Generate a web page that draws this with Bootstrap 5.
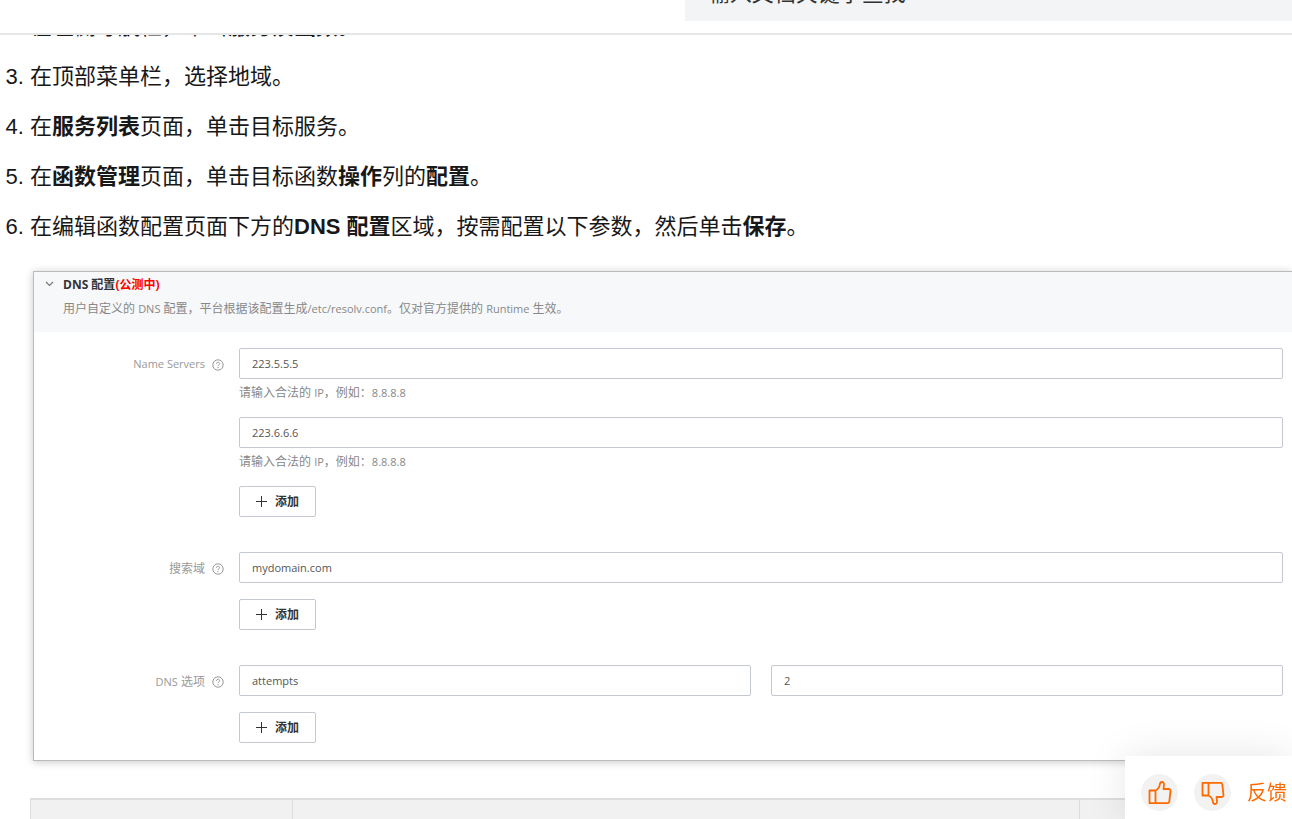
<!DOCTYPE html>
<html lang="zh-CN">
<head>
<meta charset="utf-8">
<meta name="viewport" content="width=device-width, initial-scale=1">
<title>DNS 配置</title>
<link href="https://cdn.jsdelivr.net/npm/bootstrap@5.3.0/dist/css/bootstrap.min.css" rel="stylesheet">
<style>
  body { font-family: "Liberation Sans", "Noto Sans CJK SC", sans-serif; color: #181818; background: #fff; }
  .topbar { height: 35px; border-bottom: 2px solid #e6e6e6; padding-bottom: 12px; z-index: 20; }
  .topbar .search-box { width: 47%; height: 54px; padding: 0 23px; border: 0; border-radius: 0; background: #f3f4f6; font-size: 22px; }
  .topbar .search-box::placeholder { color: #333; opacity: 1; }
  .doc { padding-top: 12px; }
  .steps { padding-left: 30px; font-size: 22px; line-height: 30px; margin-bottom: 29px; }
  .steps li + li { margin-top: 20px; }
  .panel { margin-left: 33px; border: 1px solid #b9bbbe; border-right: 0; box-shadow: 0 1px 8px rgba(0,0,0,.22); font-family: "Open Sans", "Noto Sans CJK SC", sans-serif; font-size: 12px; color: #888; }
  .panel .en { font-size: 11px; }
  .panel-top { height: 60px; background: #f7f8fa; padding-left: 10px; gap: 8px; }
  .panel-top h2 { font-size: 12px; line-height: 24px; margin: 1px 0 0; color: #333; }
  .panel-top h2 span { color: #f00; }
  .panel-top p { line-height: 24px; margin: 0; color: #888; }
  .fold { width: 11px; height: 24px; padding: 0; border: 0; background: none; }
  .panel-body { padding: 16px 9px 17px 0; }
  .field-group + .field-group { margin-top: 35px; }
  .field-label { flex: 0 0 205px; height: 33px; padding-right: 15px; gap: 7px; color: #999; }
  .panel .form-control { height: 31px; padding: 0 12px; font-size: 11px; color: #555; border: 1px solid #c4c9cf; border-radius: 2px; }
  .hint { line-height: 28px; margin-bottom: 10px; }
  .add-btn { width: 77px; height: 31px; padding: 0; gap: 8px; font-size: 12px; font-weight: 600; color: #333; border: 1px solid #c4c9cf; border-radius: 2px; background: #fff; }
  .pair { gap: 20px; }
  .mt-field { margin-top: 16px; }
  .params { margin: 37px 0 0 30px; }
  .params table { width: 100%; table-layout: fixed; border-collapse: collapse; }
  .params th { height: 60px; background: #f1f1f1; border: 1px solid #ddd; border-top-width: 2px; }
  .params .c-name { width: 20.8%; }
  .params .c-desc { width: 62.4%; }
  .feedback { padding: 17px 5px 7px 16px; gap: 16px; background: #fff; box-shadow: 0 0 40px rgba(0,0,0,.1); z-index: 10; }
  .vote { width: 37px; height: 37px; padding: 0; border: 0; border-radius: 50%; background: #f2f2f2; }
  .feedback a { font-size: 20px; line-height: 37px; padding-top: 2px; color: #ff6a00; }
</style>
</head>
<body>
<div class="vh-100 overflow-hidden position-relative">
  <header class="topbar fixed-top bg-white d-flex justify-content-end align-items-end overflow-hidden">
    <input class="search-box" type="search" placeholder="输入文档关键字查找" aria-label="搜索文档">
  </header>

  <main class="doc">
    <ol class="steps" start="2">
      <li>在左侧导航栏，单击<b>服务及函数</b>。</li>
      <li>在顶部菜单栏，选择地域。</li>
      <li>在<b>服务列表</b>页面，单击目标服务。</li>
      <li>在<b>函数管理</b>页面，单击目标函数<b>操作</b>列的<b>配置</b>。</li>
      <li>在编辑函数配置页面下方的<b>DNS 配置</b>区域，按需配置以下参数，然后单击<b>保存</b>。</li>
    </ol>

    <section class="panel bg-white">
      <div class="panel-top d-flex">
        <button class="fold d-flex align-items-center justify-content-center" type="button" aria-label="收起">
          <svg width="9" height="6" viewBox="0 0 9 6" fill="none" stroke="#777" stroke-width="1.2"><path d="M1 1l3.5 3.5L8 1"/></svg>
        </button>
        <div>
          <h2 class="fw-bold">DNS 配置<span>(公测中)</span></h2>
          <p>用户自定义的 <span class="en">DNS</span> 配置，平台根据该配置生成<span class="en">/etc/resolv.conf</span>。仅对官方提供的 <span class="en">Runtime</span> 生效。</p>
        </div>
      </div>

      <form class="panel-body">
        <div class="field-group d-flex">
          <label class="field-label d-flex align-items-center justify-content-end" for="ns1"><span class="en">Name Servers</span>
            <svg width="12" height="12" viewBox="0 0 12 12" fill="none" stroke="#999"><circle cx="6" cy="6" r="5.2"/><path d="M4.4 4.8c0-2.1 3.2-2.1 3.2-.1C7.600 5.800 6 5.800 6 7.100M6 8v1.200"/></svg>
          </label>
          <div class="flex-fill">
            <input class="form-control" id="ns1" type="text" value="223.5.5.5">
            <div class="hint">请输入合法的 <span class="en">IP</span>，例如：<span class="en">8.8.8.8</span></div>
            <input class="form-control" type="text" value="223.6.6.6" aria-label="Name Server 2">
            <div class="hint">请输入合法的 <span class="en">IP</span>，例如：<span class="en">8.8.8.8</span></div>
            <button class="add-btn d-flex align-items-center justify-content-center" type="button"><svg width="11" height="11" viewBox="0 0 11 11" stroke="#333"><path d="M5.500 0v11M0 5.500h11"/></svg>添加</button>
          </div>
        </div>

        <div class="field-group d-flex">
          <label class="field-label d-flex align-items-center justify-content-end" for="domain">搜索域
            <svg width="12" height="12" viewBox="0 0 12 12" fill="none" stroke="#999"><circle cx="6" cy="6" r="5.2"/><path d="M4.4 4.8c0-2.1 3.2-2.1 3.2-.1C7.600 5.800 6 5.800 6 7.100M6 8v1.200"/></svg>
          </label>
          <div class="flex-fill">
            <input class="form-control" id="domain" type="text" value="mydomain.com">
            <button class="add-btn mt-field d-flex align-items-center justify-content-center" type="button"><svg width="11" height="11" viewBox="0 0 11 11" stroke="#333"><path d="M5.500 0v11M0 5.500h11"/></svg>添加</button>
          </div>
        </div>

        <div class="field-group d-flex">
          <label class="field-label d-flex align-items-center justify-content-end" for="opt"><span><span class="en">DNS</span> 选项</span>
            <svg width="12" height="12" viewBox="0 0 12 12" fill="none" stroke="#999"><circle cx="6" cy="6" r="5.2"/><path d="M4.4 4.8c0-2.1 3.2-2.1 3.2-.1C7.600 5.800 6 5.800 6 7.100M6 8v1.200"/></svg>
          </label>
          <div class="flex-fill">
            <div class="pair d-flex">
              <input class="form-control" id="opt" type="text" value="attempts">
              <input class="form-control" type="text" value="2" aria-label="选项值">
            </div>
            <button class="add-btn mt-field d-flex align-items-center justify-content-center" type="button"><svg width="11" height="11" viewBox="0 0 11 11" stroke="#333"><path d="M5.500 0v11M0 5.500h11"/></svg>添加</button>
          </div>
        </div>
      </form>
    </section>

    <div class="params">
      <table>
        <thead><tr><th class="c-name"></th><th class="c-desc"></th><th></th></tr></thead>
      </table>
    </div>
  </main>

  <aside class="feedback position-fixed bottom-0 end-0 d-flex align-items-center">
    <button class="vote d-flex align-items-center justify-content-center" type="button" aria-label="有帮助">
      <svg width="24" height="24" viewBox="0 0 24 24" fill="none" stroke="#ff6a00" stroke-width="1.800" stroke-linejoin="round"><path d="M1.500 9.500h6v12.700h-6zM7.500 9.500c3.200-1.400 4-3.500 4.400-6.300.2-1.500.8-2.200 2-2.200 1.500 0 2.300 1 2.100 2.600L15.500 8h5.200c1.200 0 1.900.8 1.800 1.900l-1.200 10.800c-.1.900-.8 1.500-1.700 1.500H7.500"/></svg>
    </button>
    <button class="vote d-flex align-items-center justify-content-center" type="button" aria-label="没帮助">
      <svg width="24" height="24" viewBox="0 0 24 24" fill="none" stroke="#ff6a00" stroke-width="1.800" stroke-linejoin="round"><path d="M1.500 14.500h6V1.800h-6zM7.500 14.500c3.200 1.400 4 3.500 4.400 6.300.2 1.500.8 2.200 2 2.200 1.500 0 2.300-1 2.100-2.600L15.500 16h5.200c1.200 0 1.900-.8 1.800-1.900L21.300 3.300c-.1-.9-.8-1.500-1.700-1.500H7.500"/></svg>
    </button>
    <a class="text-decoration-none" href="#">反馈</a>
  </aside>
</div>
<script src="https://cdn.jsdelivr.net/npm/bootstrap@5.3.0/dist/js/bootstrap.bundle.min.js"></script>
</body>
</html>
